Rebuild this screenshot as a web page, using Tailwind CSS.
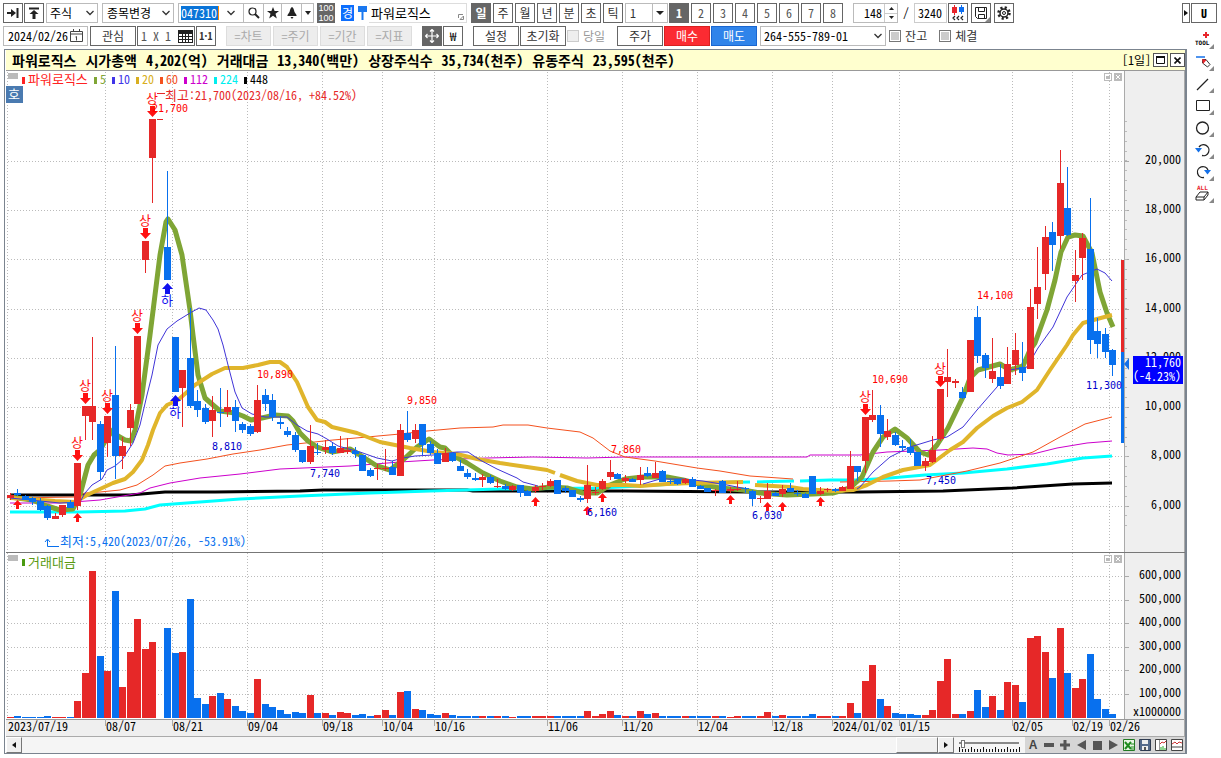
<!DOCTYPE html>
<html lang="ko">
<head>
<meta charset="utf-8">
<title>파워로직스 일봉 차트</title>
<script src="https://cdn.jsdelivr.net/npm/@tailwindcss/browser@4"></script>
</head>
<body class="bg-white text-black text-[12px] leading-4 font-['Noto_Sans_Mono_CJK_KR','Noto_Sans_CJK_KR',monospace]">
<div class="flex flex-col min-h-screen">

<!-- first toolbar -->
<header class="flex items-center h-5 mt-[3px] pl-[3px] pr-1 whitespace-nowrap">
  <button aria-label="끝으로" class="w-5 h-5 border border-[#666] flex items-center justify-center"><svg width="14" height="12" viewBox="0 0 14 12"><path d="M1 6h5" stroke="#222" stroke-width="2"/><path d="M5 2l5 4-5 4z" fill="#222"/><path d="M11.500 1v10" stroke="#222" stroke-width="2"/></svg></button>
  <button aria-label="위로" class="w-5 h-5 ml-px border border-[#666] flex items-center justify-center"><svg width="12" height="12" viewBox="0 0 12 12"><path d="M1 1.500h10" stroke="#222" stroke-width="2"/><path d="M6 3l4.500 4h-3v5h-3V7h-3z" fill="#222"/></svg></button>
  <div class="relative w-13 h-5 ml-[2px]"><select aria-label="자산" class="appearance-none w-full h-5 border border-[#bbb] pl-[3px]"><option>주식</option></select><svg class="absolute right-1 top-[7px] pointer-events-none" width="8" height="6" viewBox="0 0 8 6"><path d="M.5 1L4 4.500 7.500 1" fill="none" stroke="#333" stroke-width="1.300"/></svg></div>
  <div class="relative w-18 h-5 ml-1"><select aria-label="종목변경" class="appearance-none w-full h-5 border border-[#bbb] pl-1"><option>종목변경</option></select><svg class="absolute right-1 top-[7px] pointer-events-none" width="8" height="6" viewBox="0 0 8 6"><path d="M.5 1L4 4.500 7.500 1" fill="none" stroke="#333" stroke-width="1.300"/></svg></div>
  <div class="flex items-center w-[136px] h-5 ml-1 border border-[#bbb]">
    <input aria-label="종목코드" value="047310" class="w-[38px] h-[14px] ml-[2px] bg-[#0a74d8] text-white border-r border-orange-400 leading-[14px]">
    <button aria-label="목록" class="w-6 flex justify-center"><svg width="8" height="6" viewBox="0 0 8 6"><path d="M.5 1L4 4.500 7.500 1" fill="none" stroke="#333" stroke-width="1.300"/></svg></button>
    <button aria-label="검색" class="w-5 h-full border-l border-[#bbb] flex items-center justify-center"><svg width="12" height="12" viewBox="0 0 12 12"><circle cx="4.500" cy="4.500" r="3.500" fill="none" stroke="#222" stroke-width="1.200"/><path d="M7 7l4 4" stroke="#222" stroke-width="2"/></svg></button>
    <button aria-label="즐겨찾기" class="w-4 h-full border-l border-[#bbb] flex flex-1 items-center justify-center"><svg width="12" height="12" viewBox="0 0 12 12"><path d="M6 0l1.600 4H12L8.500 6.800 9.800 11.500 6 8.700 2.200 11.500 3.500 6.800 0 4h4.400z" fill="#222"/></svg></button>
    <button aria-label="알림" class="w-5 h-full border-l border-[#bbb] flex items-center justify-center"><svg width="10" height="12" viewBox="0 0 10 12"><path d="M5 0C3.500.5 3 3 2.500 5L.5 8v1h9V8l-2-3C7 3 6.500.5 5 0zM3.500 10h3L5 12z" fill="#222"/></svg></button>
    <button aria-label="더보기" class="w-3 h-full border-l border-[#bbb] flex items-center justify-center"><svg width="6" height="4" viewBox="0 0 6 4"><path d="M0 0h6L3 4z" fill="#222"/></svg></button>
  </div>
  <button class="w-[18px] h-5 ml-[3px] bg-[#666] text-white text-[9px] leading-[10px] font-['Liberation_Sans']">100<br>100</button>
  <button class="w-[13px] h-4 ml-[6px] bg-[#0d6efd] text-white">경</button>
  <svg class="ml-1" width="10" height="14" viewBox="0 0 10 14"><path d="M0 0h9v6H0zM3.500 6h2v8h-2z" fill="#1a78f0"/></svg>
  <div class="flex items-center justify-between w-[98px] h-5 ml-px pl-[2px] border border-[#ddd] border-l-0 text-[13px]"><span>파워로직스</span><svg class="self-end m-[2px]" width="6" height="6" viewBox="0 0 6 6"><path d="M.5 4V.5H5M5.500 2v3.500H2z" fill="none" stroke="#888"/></svg></div>
  <nav class="flex gap-[2px] ml-1 text-[#333]" aria-label="주기">
    <button class="w-5 h-5 bg-[#666] text-white font-bold">일</button><button class="w-5 h-5 border border-[#666]">주</button><button class="w-5 h-5 border border-[#666]">월</button><button class="w-5 h-5 border border-[#666]">년</button><button class="w-5 h-5 border border-[#666]">분</button><button class="w-5 h-5 border border-[#666]">초</button><button class="w-5 h-5 border border-[#666]">틱</button>
    <div class="relative w-[43px] h-5"><select aria-label="단위" class="appearance-none w-full h-5 border border-[#bbb] pl-1"><option>1</option></select><span class="absolute right-0 top-0 w-4 h-5 border border-[#bbb] flex items-center justify-center pointer-events-none"><svg width="8" height="4" viewBox="0 0 8 4"><path d="M0 0h8L4 4z" fill="#222"/></svg></span></div>
  </nav>
  <nav class="flex gap-[2px] ml-px text-[#555]" aria-label="화면">
    <button class="w-5 h-5 bg-[#666] text-white font-bold">1</button><button class="w-5 h-5 border border-[#666]">2</button><button class="w-5 h-5 border border-[#666]">3</button><button class="w-5 h-5 border border-[#666]">4</button><button class="w-5 h-5 border border-[#666]">5</button><button class="w-5 h-5 border border-[#666]">6</button><button class="w-5 h-5 border border-[#666]">7</button><button class="w-5 h-5 border border-[#666]">8</button>
  </nav>
  <div class="flex h-5 ml-[10px] w-[45px] border border-[#bbb]"><input aria-label="봉 개수" value="148" class="w-[30px] pr-[2px] text-right"><div class="flex flex-col flex-1 border-l border-[#ccc]"><button aria-label="늘리기" class="flex-1 flex items-center justify-center border-b border-[#ccc]"><svg width="5" height="3" viewBox="0 0 5 3"><path d="M0 3h5L2.500 0z" fill="#222"/></svg></button><button aria-label="줄이기" class="flex-1 flex items-center justify-center"><svg width="5" height="3" viewBox="0 0 5 3"><path d="M0 0h5L2.500 3z" fill="#222"/></svg></button></div></div>
  <span class="w-4 text-center">/</span>
  <div class="flex w-[33px] h-5 border border-[#ccc]"><input aria-label="전체 봉" value="3240" class="w-full pl-[3px]"></div>
  <button aria-label="봉 이동" class="w-5 h-5 ml-px border border-[#666] flex items-center justify-center"><svg width="14" height="18" viewBox="0 0 14 18"><path d="M1 3h5v6H1zM3 1h1v10H3z" fill="#e8252b"/><path d="M8 3h5v5H8zM10 1h1v9h-1z" fill="#0d6ef0"/><path d="M4 12l-2 2 2 2M8 12l-2 2 2 2M12 12l-2 2 2 2" fill="none" stroke="#222" stroke-width="1.200"/></svg></button>
  <button aria-label="저장" class="w-5 h-5 ml-[3px] border border-[#666] flex items-center justify-center"><svg width="18" height="18" viewBox="0 0 18 18"><path d="M3.500 3.500h11v11h-9l-2-2zM6.500 3.500v4h6v-4M6.500 14.500v-4h6v4" fill="none" stroke="#222"/><path d="M18 13v5h-5z" fill="#888"/></svg></button>
  <button aria-label="설정 열기" class="w-5 h-5 ml-[3px] border border-[#666] flex items-center justify-center"><svg width="14" height="14" viewBox="0 0 14 14"><circle cx="7" cy="7" r="5.500" fill="none" stroke="#222" stroke-width="2.500" stroke-dasharray="2.160 2.160"/><circle cx="7" cy="7" r="4" fill="#fff" stroke="#222" stroke-width="1.500"/><circle cx="7" cy="7" r="1.500" fill="none" stroke="#222"/></svg></button>
  <button aria-label="펼치기" class="w-2 h-5 ml-auto border border-[#666] flex items-center justify-center"><svg width="4" height="6" viewBox="0 0 4 6"><path d="M0 0v6l4-3z" fill="#111"/></svg></button>
  <button class="w-[26px] h-5 ml-px border border-[#666] font-bold">U</button>
</header>

<div class="flex flex-1">
<main class="flex-1 min-w-0 pl-1">

<!-- second toolbar -->
<div class="flex items-center h-5 mt-[3px] -ml-px whitespace-nowrap text-[#333]">
  <div class="flex items-center w-[85px] h-5 border border-[#bbb]"><input aria-label="날짜" value="2024/02/26" class="w-[66px] pl-1 text-black"><svg width="14" height="14" viewBox="0 0 14 14"><path d="M.5 2.500h12v10H.5zM.5 5h12M3.500 0v3M9.500 0v3M5.500 8l1-.5v4" fill="none" stroke="#444"/></svg></div>
  <button class="w-[46px] h-5 ml-[2px] border border-[#666]">관심</button>
  <button class="flex items-center justify-between w-[58px] h-5 ml-px pl-[3px] border border-[#666]"><span class="text-[#555]">1 X 1</span><svg class="mr-px" width="15" height="13" viewBox="0 0 15 13"><path d="M0 0h15v13H0z" fill="#222"/><path d="M1 4h3v2H1zM5 4h2v2H5zM8 4h2v2H8zM11 4h3v2h-3zM1 7h3v2H1zM5 7h2v2H5zM8 7h2v2H8zM11 7h3v2h-3zM1 10h3v2H1zM5 10h2v2H5zM8 10h2v2H8zM11 10h3v2h-3z" fill="#fff"/></svg></button>
  <button class="w-5 h-5 ml-px border border-[#666] font-bold text-[10px]">1·1</button>
  <div class="flex gap-[2px] ml-[10px] text-[#aaa]"><button disabled class="w-[45px] h-5 bg-[#ededed] border border-[#ddd]">=차트</button><button disabled class="w-[45px] h-5 bg-[#ededed] border border-[#ddd]">=주기</button><button disabled class="w-[45px] h-5 bg-[#ededed] border border-[#ddd]">=기간</button><button disabled class="w-[45px] h-5 bg-[#ededed] border border-[#ddd]">=지표</button></div>
  <button aria-label="십자선" class="w-5 h-5 ml-[10px] bg-[#666] flex items-center justify-center"><svg width="14" height="14" viewBox="0 0 14 14"><path d="M7 1v12M1 7h12M5 2.500L7 .5l2 2M5 11.500l2 2 2-2M2.500 5l-2 2 2 2M11.500 5l2 2-2 2" fill="none" stroke="#fff" stroke-width="1.200"/></svg></button>
  <button class="w-5 h-5 ml-px border border-[#666] text-black font-['Noto_Sans_CJK_KR',sans-serif]">₩</button>
  <button class="w-[46px] h-5 ml-[10px] border border-[#666]">설정</button>
  <button class="w-[46px] h-5 ml-px border border-[#666]">초기화</button>
  <label class="flex items-center gap-1 ml-px text-[#999]"><input type="checkbox" disabled class="appearance-none w-3 h-3 border border-[#ccc] bg-[#eee]">당일</label>
  <button class="w-[46px] h-5 ml-3 border border-[#666]">주가</button>
  <button class="w-[46px] h-5 ml-px bg-[#fb2b32] border border-[#d82020] text-white">매수</button>
  <button class="w-[46px] h-5 ml-px bg-[#3084ea] border border-[#1a66d0] text-white">매도</button>
  <div class="relative w-[126px] h-5 ml-[3px]"><select aria-label="계좌" class="appearance-none w-full h-5 border border-[#bbb] pl-[3px] text-black"><option>264-555-789-01</option></select><svg class="absolute right-1 top-[7px] pointer-events-none" width="8" height="6" viewBox="0 0 8 6"><path d="M.5 1L4 4.500 7.500 1" fill="none" stroke="#333" stroke-width="1.300"/></svg></div>
  <label class="flex items-center gap-1 ml-[3px]"><input type="checkbox" class="appearance-none w-3 h-3 border border-[#777] bg-[#ccc] shadow-[inset_0_0_0_1px_#fff]">잔고</label>
  <label class="flex items-center gap-1 ml-3"><input type="checkbox" class="appearance-none w-3 h-3 border border-[#777] bg-[#ccc] shadow-[inset_0_0_0_1px_#fff]">체결</label>
</div>

<!-- chart window -->
<section class="mt-[3px] border-[#7b848f] border border-r-2 pl-px">
  <div class="flex items-center gap-[9px] h-[21px] pl-[6px] bg-[#ffffcf] border-b border-[#999] text-[14px] font-bold whitespace-nowrap">
    <span>파워로직스</span><span>시가총액</span><span>4,202(억)</span><span>거래대금</span><span>13,340(백만)</span><span>상장주식수</span><span>35,734(천주)</span><span>유동주식</span><span>23,595(천주)</span>
    <div class="flex items-center gap-[2px] ml-auto font-normal text-[12px]"><span>[1일]</span>
    <button aria-label="최대화" class="w-[15px] h-[14px] border border-[#555] bg-white flex items-center justify-center"><svg width="9" height="8" viewBox="0 0 9 8"><path d="M.5 1v6.500h8V1M0 1h9" fill="none" stroke="#111"/><path d="M0 0h9v2H0z" fill="#111"/></svg></button>
    <button aria-label="닫기" class="w-[15px] h-[14px] border border-[#555] bg-white flex items-center justify-center"><svg width="7" height="7" viewBox="0 0 7 7"><path d="M.5.5l6 6M6.500.5l-6 6" stroke="#111" stroke-width="1.600"/></svg></button></div>
  </div>
  <svg id="price" class="block w-full h-auto" viewBox="6 71 1179 481" role="img" aria-label="일봉 차트"></svg>
  <svg id="volume" class="block w-full h-auto" viewBox="6 552 1179 185" role="img" aria-label="거래대금"></svg>
  <div class="flex items-center h-4 bg-[#f5f5f5]">
    <button aria-label="왼쪽으로" class="w-4 h-4 bg-[#f0f0f0] border border-white border-r-[#777] border-b-[#777] flex items-center justify-center"><svg width="4" height="6" viewBox="0 0 4 6"><path d="M4 0v6L0 3z" fill="#111"/></svg></button>
    <div class="flex flex-1 justify-end h-4"><div class="w-[42px] bg-[#f0f0f0] border border-white border-r-[#777] border-b-[#777]"></div></div>
    <button aria-label="오른쪽으로" class="w-4 h-4 bg-[#f0f0f0] border border-white border-r-[#777] border-b-[#777] flex items-center justify-center"><svg width="4" height="6" viewBox="0 0 4 6"><path d="M0 0v6l4-3z" fill="#111"/></svg></button>
    <div class="flex flex-col w-[62px] ml-[5px]"><input type="range" value="3" aria-label="확대" class="appearance-none h-[9px] w-[60px] bg-transparent [&::-webkit-slider-runnable-track]:h-[2px] [&::-webkit-slider-runnable-track]:bg-[#888] [&::-webkit-slider-thumb]:appearance-none [&::-webkit-slider-thumb]:w-[4px] [&::-webkit-slider-thumb]:h-2 [&::-webkit-slider-thumb]:-mt-[2px] [&::-webkit-slider-thumb]:bg-white [&::-webkit-slider-thumb]:border [&::-webkit-slider-thumb]:border-[#777]"><svg width="62" height="5" viewBox="0 0 62 5"><path d="M0 3.500h62" stroke="#111" stroke-width="3" stroke-dasharray="1 2"/><path d="M0 2.500h62" stroke="#111" stroke-width="5" stroke-dasharray="1 11"/></svg></div>
    <div class="flex items-center h-full ml-1 bg-[#d6d6d6]">
      <button class="w-4 font-bold text-[#444] font-['Liberation_Sans']">A</button>
      <button aria-label="축소" class="w-4 flex justify-center"><svg width="10" height="4"><path d="M0 0h10v4H0z" fill="#555"/></svg></button>
      <button aria-label="확대하기" class="w-4 flex justify-center"><svg width="10" height="10"><path d="M3.500 0h3v3.500H10v3H6.500V10h-3V6.500H0v-3h3.500z" fill="#555"/></svg></button>
      <button aria-label="이전" class="w-4 flex justify-center"><svg width="9" height="10"><path d="M9 0v10L0 5z" fill="#555"/></svg></button>
      <button aria-label="정지" class="w-4 flex justify-center"><svg width="9" height="9"><path d="M0 0h9v9H0z" fill="#555"/></svg></button>
      <button aria-label="다음" class="w-4 flex justify-center"><svg width="9" height="10"><path d="M0 0v10l9-5z" fill="#555"/></svg></button>
      <button aria-label="엑셀" class="w-4 flex justify-center"><svg width="12" height="12"><path d="M.5.5h11v11H.5z" fill="#e9f6e5" stroke="#237a23"/><path d="M2 3l6 7M8 3l-6 7" stroke="#1e8b1e" stroke-width="2"/><path d="M8 8h3M8 5h3M8 10h3" stroke="#1e8b1e"/></svg></button>
      <button aria-label="파일 저장" class="w-4 flex justify-center"><svg width="12" height="12"><path d="M.5.5h11v11h-10l-1-1z" fill="#556b8c" stroke="#2f3b50"/><path d="M3 1h6v4H3zM3 7h6v4H3z" fill="#eee"/><path d="M5 8h2v3H5z" fill="#555"/></svg></button>
      <button aria-label="차트 복사" class="w-4 flex justify-center"><svg width="12" height="12"><path d="M.5.5h11v11H.5z" fill="#fff" stroke="#444"/><path d="M4.500 1v10" stroke="#999"/><path d="M5 5l2-2 2 1 2-2" fill="none" stroke="#c33"/><path d="M6 11V8M8 11V7M10 11V9" stroke="#2a2"/></svg></button>
      <button aria-label="차트 보기" class="w-4 flex justify-center"><svg width="12" height="12"><path d="M.5.5h11v11H.5zM0 8h12" fill="#fff" stroke="#444"/><path d="M1 5l3-2 2 2 2-2 3 1" fill="none" stroke="#c33"/></svg></button>
    </div>
  </div>
</section>
</main>

<!-- drawing tools -->
<aside class="w-[34px] flex flex-col items-center gap-1 pt-2">
  <button aria-label="도구" class="w-5 h-[18px]"><svg width="20" height="18" viewBox="0 0 20 18"><path d="M12 1v6M9 4h6" stroke="#e8252b" stroke-width="2"/><text x="1" y="14" font-size="6" font-weight="bold" font-family="DejaVu Sans Mono">TOOL</text><path d="M20 13v5h-5z" fill="#888"/></svg></button>
  <button aria-label="선 지우기" class="w-5 h-[18px]"><svg width="20" height="18" viewBox="0 0 20 18"><path d="M2 4h9" stroke="#1470e8" stroke-width="1.500"/><path d="M8.500 6.500h3.500l4 5-2.500 2.500-5-4z" fill="#fff" stroke="#333"/><path d="M8 6l1 5 3.500-4z" fill="#e8252b"/><path d="M20 13v5h-5z" fill="#888"/></svg></button>
  <button aria-label="추세선" class="w-5 h-[18px]"><svg width="20" height="18" viewBox="0 0 20 18"><path d="M3 15L14 4" stroke="#222" stroke-width="1.300"/><path d="M20 13v5h-5z" fill="#888"/></svg></button>
  <button aria-label="사각형" class="w-5 h-[18px]"><svg width="20" height="18" viewBox="0 0 20 18"><path d="M2.500 3.500h13v10h-13z" fill="none" stroke="#222"/><path d="M20 13v5h-5z" fill="#888"/></svg></button>
  <button aria-label="원" class="w-5 h-[18px]"><svg width="20" height="18" viewBox="0 0 20 18"><circle cx="8.500" cy="9" r="6" fill="none" stroke="#222" stroke-width="1.300"/><path d="M20 13v5h-5z" fill="#888"/></svg></button>
  <button aria-label="실행 취소" class="w-5 h-[18px]"><svg width="20" height="18" viewBox="0 0 20 18"><path d="M5 6a5.500 5.500 0 1 1 3 8.500" fill="none" stroke="#222" stroke-width="1.300"/><path d="M1 7h7l-3.500 4.500z" fill="#1470e8"/><path d="M20 13v5h-5z" fill="#888"/></svg></button>
  <button aria-label="다시 실행" class="w-5 h-[18px]"><svg width="20" height="18" viewBox="0 0 20 18"><path d="M14 7a5.500 5.500 0 1 0-4 7.500" fill="none" stroke="#222" stroke-width="1.300"/><path d="M10 7h7l-3.500 4.500z" fill="#1470e8"/><path d="M20 13v5h-5z" fill="#888"/></svg></button>
  <button aria-label="모두 지우기" class="w-5 h-[18px]"><svg width="20" height="18" viewBox="0 0 20 18"><text x="3" y="5" font-size="6" font-weight="bold" fill="#e8252b" font-family="DejaVu Sans Mono">ALL</text><path d="M2 12l4-5h8l-4 5zM2 12v3h8v-3M10 15l4-5V7" fill="#fff" stroke="#222"/><path d="M20 13v5h-5z" fill="#888"/></svg></button>
</aside>
</div>
</div>

<script>
const RED = '#e62828', BLUE = '#0870ee';
// One row per trading day: r/b, high, body top, body bottom, low, turnover bar top
const rows = `r 493 495 498 500 717|b 489 493 495 496 716|b 495 496 500 500 717|b 497 498 502 505 717|b 498 501 510 511 717|b 505 506 518 520 716|r 513 516 519 519 717|r 505 505 515 517 717|b 500 502 508 508 717|r 463 463 506 510 701
r 406 406 416 440 673|r 337 406 422 440 571|b 421 424 472 480 656|r 416 416 443 457 671|b 346 395 456 479 591|r 437 446 456 469 687|r 404 410 428 446 652|r 336 336 404 404 619|r 241 241 260 273 649|r 119 119 158 203 642
-|b 171 247 280 280 628|b 337 337 392 392 653|r 370 370 388 427 652|b 308 358 406 408 599|b 390 401 410 417 698|b 404 408 422 424 704|r 396 410 421 437 696|b 388 412 413 427 693|r 390 407 412 417 699
b 400 407 421 432 706|b 422 424 430 433 711|b 424 426 434 436 713|r 385 400 432 433 679|b 389 395 404 411 704|b 394 400 417 421 707|b 416 422 424 429 710|b 427 431 435 437 714|b 432 435 450 452 712|b 450 450 462 463 713
r 425 446 462 464 695|b 443 452 453 455 713|r 440 447 450 454 713|b 443 446 453 455 715|r 436 448 453 453 712|r 438 450 452 454 713|b 447 451 454 458 715|b 455 455 471 471 714|b 468 470 476 477 716|r 464 468 469 480 715
r 449 468 469 471 710|b 461 467 475 475 715|r 424 430 476 476 692|b 411 433 440 442 691|r 424 430 439 443 709|b 424 424 445 455 710|b 441 444 453 455 714|b 449 453 464 464 715|r 448 453 462 462 713|b 452 453 461 462 715
b 460 466 471 471 716|b 469 473 477 479 716|b 473 478 480 481 716|r 474 477 480 487 716|b 475 477 483 484 716|r 479 486 487 488 716|b 484 486 489 490 716|r 485 486 490 491 717|b 485 485 493 497 716|b 490 491 496 496 716
r 485 487 491 493 716|r 483 486 487 490 716|r 479 481 486 487 716|b 480 480 494 494 716|b 486 488 491 493 716|b 490 490 497 497 716|b 496 498 500 502 716|r 465 485 499 503 711|r 487 492 493 495 716|r 479 481 489 490 714
r 460 472 477 480 711|b 473 474 479 479 715|r 475 478 481 483 716|b 478 479 482 482 716|r 467 475 480 485 711|b 467 473 476 477 714|r 462 473 478 478 713|b 470 471 482 482 716|b 479 481 482 484 716|b 479 479 484 485 716
r 478 479 483 484 716|b 477 479 487 487 716|b 485 486 489 489 716|b 488 488 492 492 716|r 489 490 491 496 716|b 480 481 493 493 716|r 487 489 491 493 717|r 481 489 490 491 716|b 487 488 489 493 716|b 490 491 499 506 716
r 496 498 499 503 716|r 483 491 499 499 712|b 492 493 496 496 716|r 485 489 494 497 715|b 483 488 492 492 716|b 490 493 494 496 716|b 493 494 498 498 716|b 476 476 494 494 714|r 487 491 494 495 716|r 488 489 490 492 716
b 488 489 491 492 716|r 486 487 491 491 716|r 451 466 489 489 703|b 466 466 472 481 713|r 417 417 461 473 681|r 390 415 420 422 665|b 405 415 434 447 699|r 419 431 437 440 706|b 432 435 445 446 713|b 440 446 448 451 714
b 439 447 453 455 714|b 452 452 466 466 715|r 458 461 466 471 715|r 436 450 462 463 710|r 389 389 439 441 681|r 349 377 382 397 659|r 379 381 383 388 714|b 387 392 398 399 714|r 340 340 392 392 711|b 306 317 356 363 690
b 353 355 368 378 707|r 338 371 379 383 696|b 364 377 386 389 710|r 347 364 384 384 682|r 333 350 365 375 685|b 342 367 373 381 702|r 289 307 369 369 638|r 247 287 304 319 636|r 226 237 274 290 652|b 222 232 245 271 678
r 150 183 236 249 628|b 167 208 235 236 673|r 250 275 281 302 688|r 233 238 258 280 679|b 198 249 340 354 654|b 318 331 344 358 699|b 328 334 352 358 709|b 349 350 365 376 714`.split(/[|\n]/);

const averages = [
 ['#000', 3, '10,495 130,495 165,492 215,492 300,491 323,490 467,490 473,491 625,491 750,492 860,492 943,491 1013,488 1073,484 1112,483'],
 ['#0ff', 3, '10,512 80,512 125,511 145,509 160,505 200,502 240,499 300,496 370,493 430,491 500,489 600,488 640,486 690,483 750,482'],
 ['#0ff', 3, '757,482 794,481'], ['#0ff', 3, '800,481 830,480 860,480 890,478 925,475 963,473 1007,469 1047,464 1083,458 1112,456'],
 ['#c0c', 1, '10,503 60,503 100,500 140,493 150,488 170,483 200,478 240,474 280,469 350,466 400,462 433,460 487,458 533,457 587,458 625,457 807,457 810,455 860,455 887,452 940,450 973,448 987,449 997,453 1008,455 1033,454 1057,448 1087,443 1112,441'],
 ['#f4511e', 1, '10,498 75,497 85,493 100,492 120,490 137,485 153,475 165,466 180,463 207,459 233,454 260,450 287,445 333,440 367,437 400,434 427,431 460,428 493,427 503,425 528,425 547,428 580,432 593,438 610,451 625,457 655,461 697,468 720,471 750,476 793,479'],
 ['#f4511e', 1, '840,482 890,481 920,480 967,471 1000,463 1033,452 1060,437 1085,424 1112,417'],
 ['#7fa535', 5, '10,497 32,500 47,506 60,510 73,509 80,495 88,465 94,455 100,450 107,438 113,430 118,436 125,440 131,441 135,430 142,395 150,335 155,295 160,255 166,222 168,219 175,230 182,255 190,310 193,335 198,375 205,398 213,405 220,411 235,413 243,416 251,420 262,418 275,415 288,416 293,421 300,433 308,441 317,447 332,452 350,449 360,455 377,466 390,470 403,460 417,447 429,439 440,447 445,448 452,455 467,463 483,473 500,481 517,487 533,489 550,487 567,488 583,493 597,493 610,485 625,479 643,477 667,477 683,480 703,485 720,488 743,490 760,493 787,495 813,494 833,493 850,488 862,477 873,452 883,437 895,429 907,438 920,452 928,455 937,445 948,428 963,397 970,378 978,370 1000,364 1010,370 1023,366 1030,350 1035,343 1047,310 1055,280 1061,252 1068,237 1075,235 1083,236 1092,253 1100,292 1107,313 1113,327'],
 ['#e0b52b', 4, '10,498 30,499 55,501 75,502 87,495 100,489 113,483 125,479 133,472 142,460 148,445 153,430 160,413 167,405 178,400 195,385 212,374 225,368 243,368 258,365 270,362 280,362 287,367 297,382 308,407 317,420 325,422 332,427 357,433 380,442 410,448 433,452 457,454 477,459 500,463 527,467 547,470 555,473'],
 ['#e0b52b', 4, '560,475 577,481 597,485 625,485 640,486 667,484 693,483 743,482'],
 ['#e0b52b', 4, '755,485 773,486 790,487 803,489 833,491 853,490 867,485 883,477 903,470 930,465 950,450 963,442 977,428 993,416 1007,408 1022,402 1037,390 1050,370 1067,345 1073,335 1083,323 1097,319 1112,315'],
 ['#4034d8', 1, '10,498 60,503 80,502 85,493 92,485 102,479 107,470 115,466 122,460 133,443 140,425 147,395 152,375 158,345 167,329 177,321 190,313 199,308 206,310 213,320 218,329 223,345 228,365 235,392 242,408 252,414 265,417 287,417 297,425 307,431 318,434 327,439 338,446 360,452 377,458 392,461 403,458 415,456 433,455 457,452 468,452 480,460 497,469 517,478 523,482 538,486'],
 ['#4034d8', 1, '643,484 660,479 683,479 703,481 727,485 747,489'],
 ['#4034d8', 1, '857,489 860,487 873,472 890,457 910,447 933,440 947,437 963,427 977,410 997,387 1010,370 1027,367 1038,348 1053,327 1067,297 1082,275 1097,269 1105,273 1112,281']
];

const rect = (x, y, w, h, c) => `<rect x="${x}" y="${y}" width="${w}" height="${h}" fill="${c}"/>`;
const line = (x1, y1, x2, y2, c, more = '') => `<path d="M${x1} ${y1}L${x2} ${y2}" stroke="${c}" fill="none" ${more}/>`;
const text = (x, y, s, c = '#000', more = '') => `<text x="${x}" y="${y}" fill="${c}" ${more}>${s}</text>`;
const mono = 'font-family="DejaVu Sans Mono" font-size="10"';
const large = 'font-size="13"';
const dots = 'stroke-dasharray="1 2"';
const dates = [[105,'08/07'],[172,'08/21'],[247,'09/04'],[322,'09/18'],[382,'10/04'],[434,'10/16'],[547,'11/06'],[622,'11/20'],[697,'12/04'],[772,'12/18'],[832,'2024/01/02'],[899,'01/15'],[1012,'02/05'],[1072,'02/19'],[1109,'02/26']];
const paneButtons = y => `<rect x="1104.500" y="${y + .5}" width="7" height="7" fill="none" stroke="#bbb"/>` + rect(1106, y + 3, 4, 3, '#bbb') + rect(1114, y, 8, 8, '#bbb') + line(1116, y + 2, 1120, y + 6, '#fff') + line(1120, y + 2, 1116, y + 6, '#fff');
const verticals = (a, b) => [7, ...dates.map(d => d[0])].map(x => line(x + .5, a, x + .5, b, '#bbb', dots)).join('');

let p = rect(1125, 71, 60, 482, '#efefef') + verticals(72, 552);
[[161,'20,000'],[210,'18,000'],[259,'16,000'],[309,'14,000'],[358,'12,000'],[407,'10,000'],[456,'8,000'],[506,'6,000']].forEach(([y, s]) => {
  p += line(8, y + .5, 1124, y + .5, '#bbb', dots) + line(1124, y + .5, 1129, y + .5, '#aaa') + text(1181, y + 3, s, '#000', 'text-anchor="end"');
});
for (let k = 0; k < 42; k++) { const y = 121 + Math.round(k * 9.86); p += line(1124, y + .5, 1127, y + .5, '#bbb'); }
p += line(1124.5, 71, 1124.5, 552, '#aaa') + line(1184.5, 71, 1184.5, 552, '#aaa');
averages.forEach(([c, w, pts]) => { p += `<polyline points="${pts}" fill="none" stroke="${c}" stroke-width="${w}" stroke-linejoin="round"/>`; });

let v = rect(1125, 552, 60, 167, '#efefef') + verticals(553, 718);
[[576,'600,000'],[600,'500,000'],[623,'400,000'],[647,'300,000'],[670,'200,000'],[694,'100,000']].forEach(([y, s]) => {
  v += line(8, y + .5, 1124, y + .5, '#bbb', dots) + line(1124, y + .5, 1129, y + .5, '#aaa') + text(1181, y + 3, s, '#000', 'text-anchor="end"');
});
rows.forEach((row, i) => {
  const f = row.split(' '); if (f.length < 6) return;
  const c = f[0] === 'r' ? RED : BLUE, x = Math.floor(10 + 7.5 * i), [hi, top, bot, lo, vol] = f.slice(1).map(Number);
  p += rect(x, hi, 1, lo - hi, c) + rect(x - 3, top, 7, Math.max(1, bot - top), c);
  v += rect(x - 3, vol, 7, 718 - vol, c);
});
p += rect(1121, 260, 3, 92, RED) + rect(1121, 352, 3, 91, BLUE);

// Limit-up and limit-down marks
const down = (x, y, c) => `<path d="M${x - 2} ${y}h5v5h3l-5.500 6-5.500-6h3z" fill="${c}"/>`;
const up = (x, y, c) => `<path d="M${x + .5} ${y}l5.500 6h-3v5h-5v-5h-3z" fill="${c}"/>`;
[[77,450],[85,393],[107,403],[137,323],[145,228],[152,106],[865,404],[940,376]].forEach(([x, y]) => { p += down(x, y, '#f11') + text(x - 6, y - 3, '상', '#f11', large); });
[[167,283],[175,395]].forEach(([x, y]) => { p += up(x, y, '#11e') + text(x - 6, y + 22, '하', '#11e', large); });
[[17,500],[77,513],[535,497],[587,506],[602,493],[730,495],[767,502],[782,502],[820,497]].forEach(([x, y]) => { p += `<path d="M${x + .5} ${y}l4.500 5h-3v4h-3v-4h-3z" fill="#f11"/>`; });
[[257,378,'10,890'],[407,404,'9,850'],[611,453,'7,860'],[872,383,'10,690'],[977,299,'14,100'],[152,112,'21,700']].forEach(([x, y, s]) => p += text(x, y, s, '#f00', mono));
[[212,450,'8,810'],[310,477,'7,740'],[587,516,'6,160'],[752,519,'6,030'],[926,484,'7,450'],[1086,389,'11,300']].forEach(([x, y, s]) => p += text(x, y, s, '#00c', mono));
p += line(157, 93.5, 165, 93.5, RED) + line(157, 119.5, 163, 119.5, RED) + text(165, 100, '<tspan font-size="13">최고</tspan>:21,700(2023/08/16, +84.52%)', RED);
p += `<path d="M47.500 540v6.500H59M45 542l2.500-3 2.500 3" fill="none" stroke="${BLUE}"/>` + text(60, 546, '<tspan font-size="13">최저</tspan>:5,420(2023/07/26, -53.91%)', BLUE);

// Legend and current price
p += rect(8, 73, 10, 6, '#bbb') + rect(6, 86, 17, 17, '#4a7ab0') + text(8, 99, '호', '#fff', large);
[[22,'파워로직스','#f22',large],[94,'5','#7fa535'],[112,'10','#4034e8'],[136,'20','#d8ae20'],[160,'60','#f4511e'],[184,'112','#c0c'],[214,'224','#0ee'],[244,'448','#000']].forEach(([x, s, c, m]) => p += rect(x, 77, 3, 7, c) + text(x + 6, 84, s, c, m));
p += paneButtons(73) + `<path d="M1124 364l5-6v12z" fill="#1470e8"/>` + rect(1133, 356, 50, 28, '#00f') + text(1181, 367, '11,760', '#fff', 'text-anchor="end"') + text(1181, 381, '(-4.23%)', '#fff', 'text-anchor="end"');

v += line(6, 552.5, 1185, 552.5, '#777') + rect(6, 719, 1179, 18, '#efefef') + line(6, 719.5, 1185, 719.5, '#999') + line(6, 736.5, 1185, 736.5, '#aaa') + line(1124.5, 553, 1124.5, 719, '#aaa') + line(1184.5, 553, 1184.5, 736, '#aaa');
v += text(1181, 716, 'x1000000', '#000', 'text-anchor="end"') + text(8, 731, '2023/07/19') + dates.map(([x, s]) => line(x + .5, 719, x + .5, 726, '#aaa') + text(x + 1, 731, s)).join('');
v += rect(8, 555, 10, 6, '#bbb') + rect(22, 559, 3, 7, '#4a9a10') + text(28, 567, '거래대금', '#5a9a10', large) + paneButtons(555);

document.getElementById('price').innerHTML = p;
document.getElementById('volume').innerHTML = v;
</script>
</body>
</html>
